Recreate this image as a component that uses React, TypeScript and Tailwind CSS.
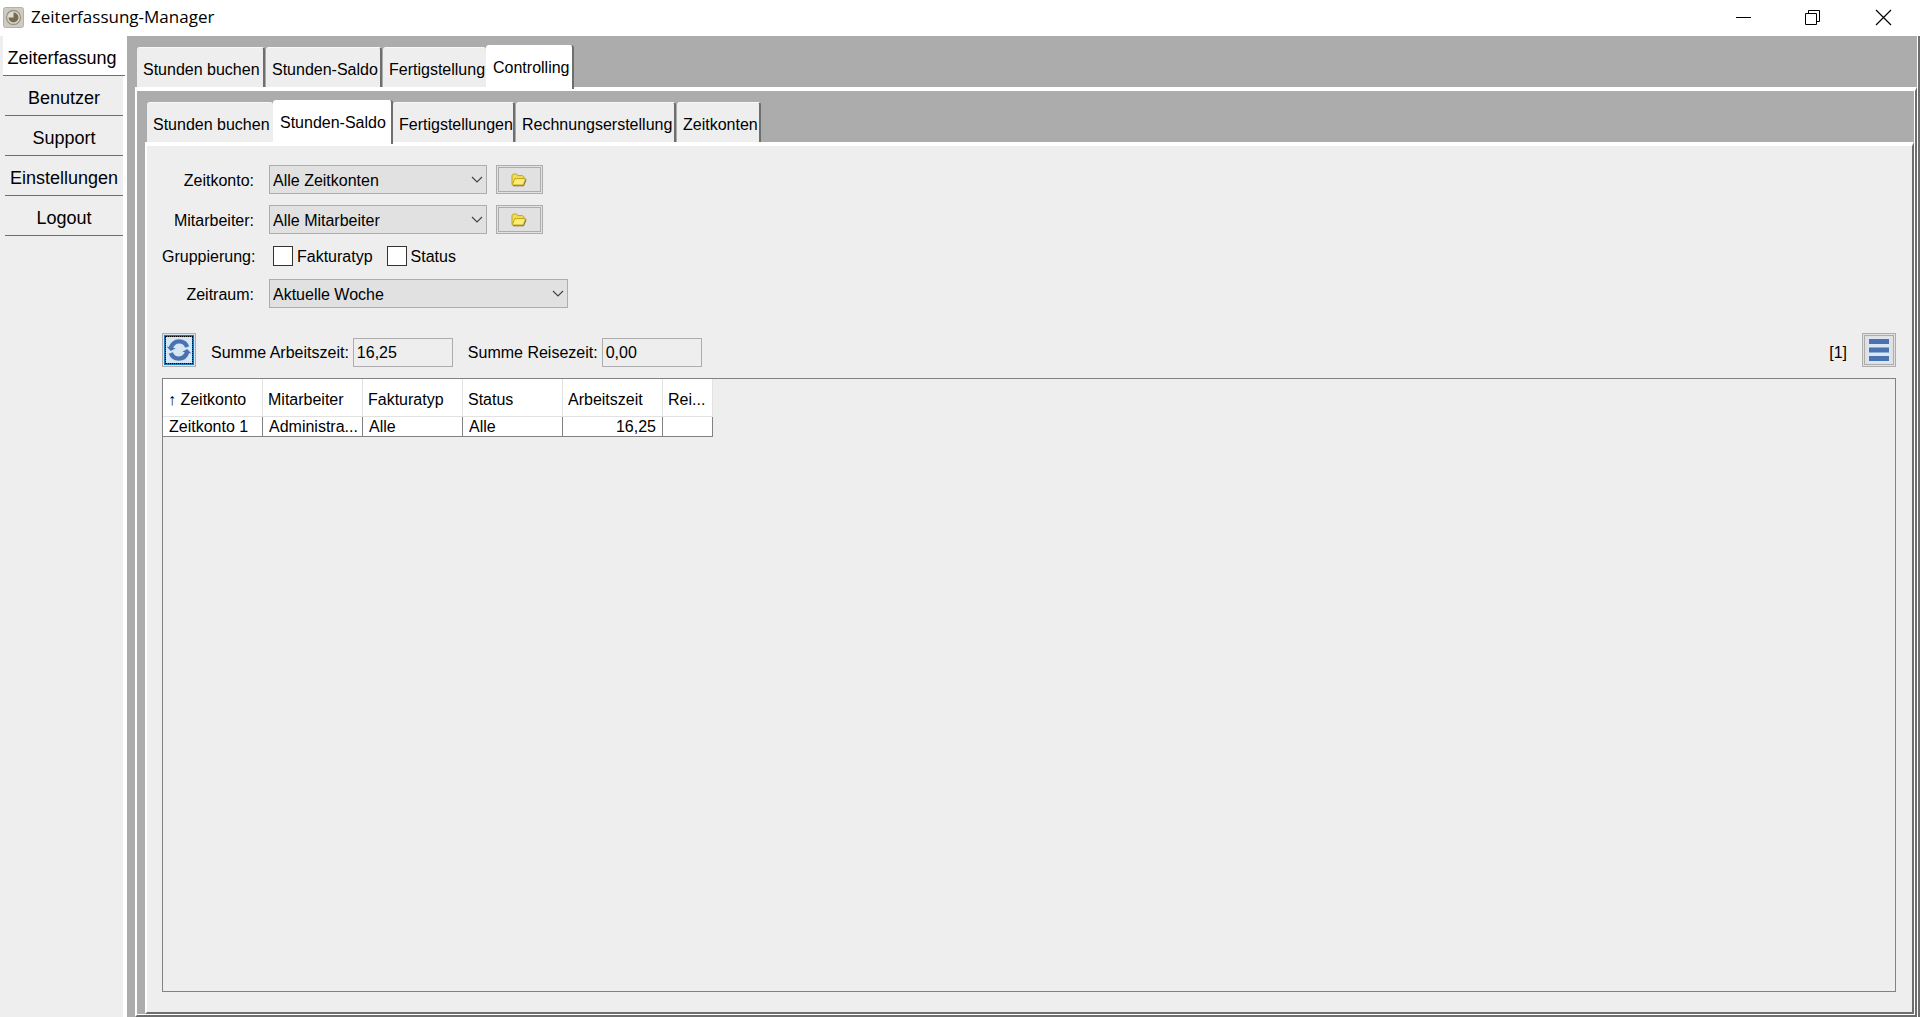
import React, { useState } from 'react';
import clsx from 'clsx';

type Tab = { title: string; width: string };

type SelectBoxProps = {
  id: string;
  options: string[];
  className: string;
};

const menuItems = ['Zeiterfassung', 'Benutzer', 'Support', 'Einstellungen', 'Logout'];

const mainTabs: Tab[] = [
  { title: 'Stunden buchen', width: 'w-32' },
  { title: 'Stunden-Saldo', width: 'w-[116px]' },
  { title: 'Fertigstellung', width: 'w-[103px]' },
  { title: 'Controlling', width: 'w-[88px]' },
];

const controllingTabs: Tab[] = [
  { title: 'Stunden buchen', width: 'w-[126px]' },
  { title: 'Stunden-Saldo', width: 'w-[120px]' },
  { title: 'Fertigstellungen', width: 'w-[122px]' },
  { title: 'Rechnungserstellung', width: 'w-[160px]' },
  { title: 'Zeitkonten', width: 'w-[84px]' },
];

const columns = [
  { title: '↑ Zeitkonto', width: 'w-[100px]' },
  { title: 'Mitarbeiter', width: 'w-[100px]' },
  { title: 'Fakturatyp', width: 'w-[100px]' },
  { title: 'Status', width: 'w-[100px]' },
  { title: 'Arbeitszeit', width: 'w-[100px]' },
  { title: 'Rei...', width: 'w-[50px]' },
];

const rows = [['Zeitkonto 1', 'Administra...', 'Alle', 'Alle', '16,25', '']];

const AppIcon = () => (
  <svg width="21" height="21" viewBox="0 0 21 21" aria-hidden="true">
    <rect x="0.5" y="0.5" width="20" height="20" rx="2" fill="#cfcbc0" stroke="#b5b0a3" />
    <circle cx="10.5" cy="10.5" r="7" fill="#dedbd2" stroke="#9b9585" strokeWidth="1.4" />
    <path d="M10.5 10.5V5.5a5 5 0 1 1-5 5z" fill="#756b50" />
  </svg>
);

const FolderIcon = () => (
  <svg width="16" height="14" viewBox="0 0 16 14" aria-hidden="true">
    <path d="M1 11.5V2.2L2.5 1h3l1.3 1.6h4.7l1.3 1V6" fill="#f3dc50" stroke="#c0a428" />
    <path d="M1.2 12 3.8 5.6h10.9L12.2 12z" fill="#fbee74" stroke="#c0a428" />
    <path d="M2 12.8h10.7l2.4-6.2" fill="none" stroke="#84713a" />
  </svg>
);

const RefreshIcon = () => (
  <svg width="26" height="26" viewBox="0 0 26 26" className="shrink-0" aria-hidden="true">
    <g fill="none" stroke="#4a72b0" strokeWidth="4.4">
      <path d="M4.6 11.5C6 7 9.3 4.4 13.2 4.4c3.6 0 6.6 2 8 5.6" />
      <path d="M21.4 14.5c-1.4 4.5-4.7 7.1-8.6 7.1-3.6 0-6.6-2-8-5.6" />
    </g>
    <path d="M0.5 9.6l9.2 1.6L4.8 14z" fill="#4a72b0" />
    <path d="M25.5 16.4l-9.2-1.6L21.2 12z" fill="#4a72b0" />
  </svg>
);

const SelectBox: React.FC<SelectBoxProps> = ({ id, options, className }) => (
  <div className={clsx('relative', className)}>
    <select
      id={id}
      className="block h-[29px] w-full appearance-none border border-[#adadad] bg-[#e1e1e1] pl-[3px] pr-6 pt-[2px] outline-none"
    >
      {options.map((option) => (
        <option key={option}>{option}</option>
      ))}
    </select>
    <svg
      className="pointer-events-none absolute right-1 top-[11px]"
      width="12"
      height="8"
      viewBox="0 0 12 8"
      fill="none"
      stroke="#444"
      strokeWidth="1.2"
      aria-hidden="true"
    >
      <path d="M1 1l5 5 5-5" />
    </svg>
  </div>
);

const FolderButton = ({ label }: { label: string }) => (
  <button
    aria-label={label}
    className="flex h-[29px] w-[47px] items-center justify-center border-3 border-double border-[#adadad] bg-[#e1e1e1] pr-px"
  >
    <FolderIcon />
  </button>
);

const CheckField = ({ label }: { label: string }) => (
  <label className="flex items-center gap-1">
    <input
      type="checkbox"
      className="size-5 appearance-none border border-[#333] bg-white checked:bg-[#4a72b0]"
    />
    <span className="pt-[2px] leading-[22px]">{label}</span>
  </label>
);

// Tab strip with the raised frame below it, used for both levels
const TabPane = ({
  tabs,
  initial,
  children,
}: {
  tabs: Tab[];
  initial: string;
  children: React.ReactNode;
}) => {
  const [active, setActive] = useState(initial);
  const activeIndex = tabs.findIndex((tab) => tab.title === active);

  return (
    <div className="flex flex-1 flex-col bg-[#acacac]">
      <div role="tablist" className="flex items-end pl-[10px] pt-[9px]">
        {tabs.map((tab, index) => (
          <button
            key={tab.title}
            role="tab"
            aria-selected={index === activeIndex}
            onClick={() => setActive(tab.title)}
            className={clsx(
              'rounded-t-[3px] text-left whitespace-nowrap',
              tab.width,
              index === activeIndex
                ? 'relative -mb-[2px] h-11 border-r-2 border-[#6e6e6e] bg-white pl-[7px] pt-[2px]'
                : 'h-10 border-t border-t-[#f8f8f8] bg-[#eee] pl-[6px] pt-1',
              index !== activeIndex && index !== activeIndex - 1 && 'mr-px border-r-2 border-r-[#6e6e6e]'
            )}
          >
            {tab.title}
          </button>
        ))}
      </div>
      <div className="ml-2 flex flex-1 flex-col border-2 border-t-4 border-white border-r-[#6e6e6e] border-b-[#6e6e6e]">
        {children}
      </div>
    </div>
  );
};

const SaldoView = () => (
  <div className="flex flex-1 flex-col bg-[#eee] pb-5 pl-[15px] pr-4 pt-[19px]">
    <div className="grid grid-cols-[92px_1fr] items-center gap-x-[15px]">
      <label htmlFor="zeitkonto" className="pt-[2px] text-right">Zeitkonto:</label>
      <div className="flex gap-[9px]">
        <SelectBox id="zeitkonto" options={['Alle Zeitkonten', 'Zeitkonto 1']} className="w-[218px]" />
        <FolderButton label="Zeitkonto wählen" />
      </div>

      <label htmlFor="mitarbeiter" className="mt-[11px] pt-[2px] text-right">Mitarbeiter:</label>
      <div className="mt-[11px] flex gap-[9px]">
        <SelectBox id="mitarbeiter" options={['Alle Mitarbeiter', 'Administrator']} className="w-[218px]" />
        <FolderButton label="Mitarbeiter wählen" />
      </div>

      <span className="mt-[10px] pt-[2px] text-right leading-[22px]">Gruppierung:</span>
      <div className="mt-[10px] flex gap-[14px] pl-1">
        <CheckField label="Fakturatyp" />
        <CheckField label="Status" />
      </div>

      <label htmlFor="zeitraum" className="mt-[11px] pt-[2px] text-right">Zeitraum:</label>
      <SelectBox id="zeitraum" options={['Aktuelle Woche', 'Aktueller Monat']} className="mt-[11px] w-[299px]" />
    </div>

    <div className="mt-[25px] flex items-end">
      <button
        aria-label="Aktualisieren"
        className="flex size-[34px] items-center justify-center border border-[#adadad] bg-[#d6e6f2] p-px"
      >
        <span className="flex size-[30px] items-center justify-center border-2 border-[#1878b8] outline-1 -outline-offset-2 outline-dotted outline-black">
          <RefreshIcon />
        </span>
      </button>
      <label htmlFor="arbeitszeit" className="ml-[15px] mr-1 leading-[29px]">Summe Arbeitszeit:</label>
      <input
        id="arbeitszeit"
        readOnly
        value="16,25"
        className="h-[29px] w-[100px] border border-[#adadad] bg-[#eee] px-[3px] outline-none"
      />
      <label htmlFor="reisezeit" className="ml-[15px] mr-1 leading-[29px]">Summe Reisezeit:</label>
      <input
        id="reisezeit"
        readOnly
        value="0,00"
        className="h-[29px] w-[100px] border border-[#adadad] bg-[#eee] px-[3px] outline-none"
      />
      <span className="ml-auto mr-[15px] leading-[29px]">[1]</span>
      <button
        aria-label="Menü"
        className="flex size-[34px] items-center justify-center border-3 border-double border-[#adadad] bg-[#e1e1e1]"
      >
        <svg width="28" height="28" viewBox="0 0 28 28" aria-hidden="true">
          <rect x="3" y="1" width="22" height="26" fill="#dbe6f0" />
          <path d="M4 5.5h20M4 14h20M4 22.5h20" stroke="#4a72b0" strokeWidth="5" />
        </svg>
      </button>
    </div>

    <div className="mt-[11px] flex-1 border border-[#828282]">
      <table className="w-[550px] table-fixed border-separate border-spacing-0">
        <thead>
          <tr>
            {columns.map((column) => (
              <th
                key={column.title}
                className={clsx(
                  'h-[38px] border-b border-r border-[#e2e2e2] bg-white pl-[5px] pt-1 text-left font-normal whitespace-nowrap',
                  column.width
                )}
              >
                {column.title}
              </th>
            ))}
          </tr>
        </thead>
        <tbody>
          {rows.map((row) => (
            <tr key={row[0]}>
              {row.map((cell, index) => (
                <td
                  key={index}
                  className={clsx(
                    'h-5 border-b border-r border-[#828282] bg-white px-[6px] leading-[19px] whitespace-nowrap',
                    index === 4 && 'text-right'
                  )}
                >
                  {cell}
                </td>
              ))}
            </tr>
          ))}
        </tbody>
      </table>
    </div>
  </div>
);

const App: React.FC = () => {
  const [activeMenu, setActiveMenu] = useState('Zeiterfassung');

  return (
    <div className="flex min-h-screen flex-col bg-white font-['Liberation_Sans',Arial,sans-serif] text-base text-black">
      <header className="flex h-9 items-center gap-[7px] pb-[2px] pl-[3px]">
        <AppIcon />
        <h1 className="font-['Open_Sans','Noto_Sans',sans-serif] text-[17px]">Zeiterfassung-Manager</h1>
        <div className="ml-auto flex h-full items-center pr-7">
          <button aria-label="Minimieren" className="mr-[52px]">
            <svg width="17" height="17" viewBox="0 0 17 17" stroke="#000" aria-hidden="true">
              <path d="M1 8.5h15" />
            </svg>
          </button>
          <button aria-label="Wiederherstellen" className="mr-[54px]">
            <svg width="17" height="17" viewBox="0 0 17 17" fill="none" stroke="#000" aria-hidden="true">
              <path d="M1.5 4.5h11v11h-11zM4.5 4.5v-3h11v11h-3" />
            </svg>
          </button>
          <button aria-label="Schließen">
            <svg width="17" height="17" viewBox="0 0 17 17" stroke="#000" strokeWidth="1.2" aria-hidden="true">
              <path d="M1 1l15 15M16 1L1 16" />
            </svg>
          </button>
        </div>
      </header>

      <div className="flex flex-1">
        <nav className="flex w-[127px] flex-col border-r-4 border-white bg-[#eee]">
          {menuItems.map((item) => (
            <button
              key={item}
              onClick={() => setActiveMenu(item)}
              className={clsx(
                'h-10 border-b border-[#6e6e6e] pt-[6px] text-[18px] whitespace-nowrap',
                item === activeMenu ? 'ml-[3px] -mr-[2px] bg-white pr-1' : 'ml-[5px]'
              )}
            >
              {item}
            </button>
          ))}
        </nav>
        <main className="flex flex-1 border-r-2 border-[#6e6e6e]">
          <div className="flex flex-1 border-r border-white">
            <TabPane tabs={mainTabs} initial="Controlling">
              <div className="flex flex-1 border-b border-r border-white">
                <TabPane tabs={controllingTabs} initial="Stunden-Saldo">
                  <SaldoView />
                </TabPane>
              </div>
            </TabPane>
          </div>
        </main>
      </div>
    </div>
  );
};

export default App;
